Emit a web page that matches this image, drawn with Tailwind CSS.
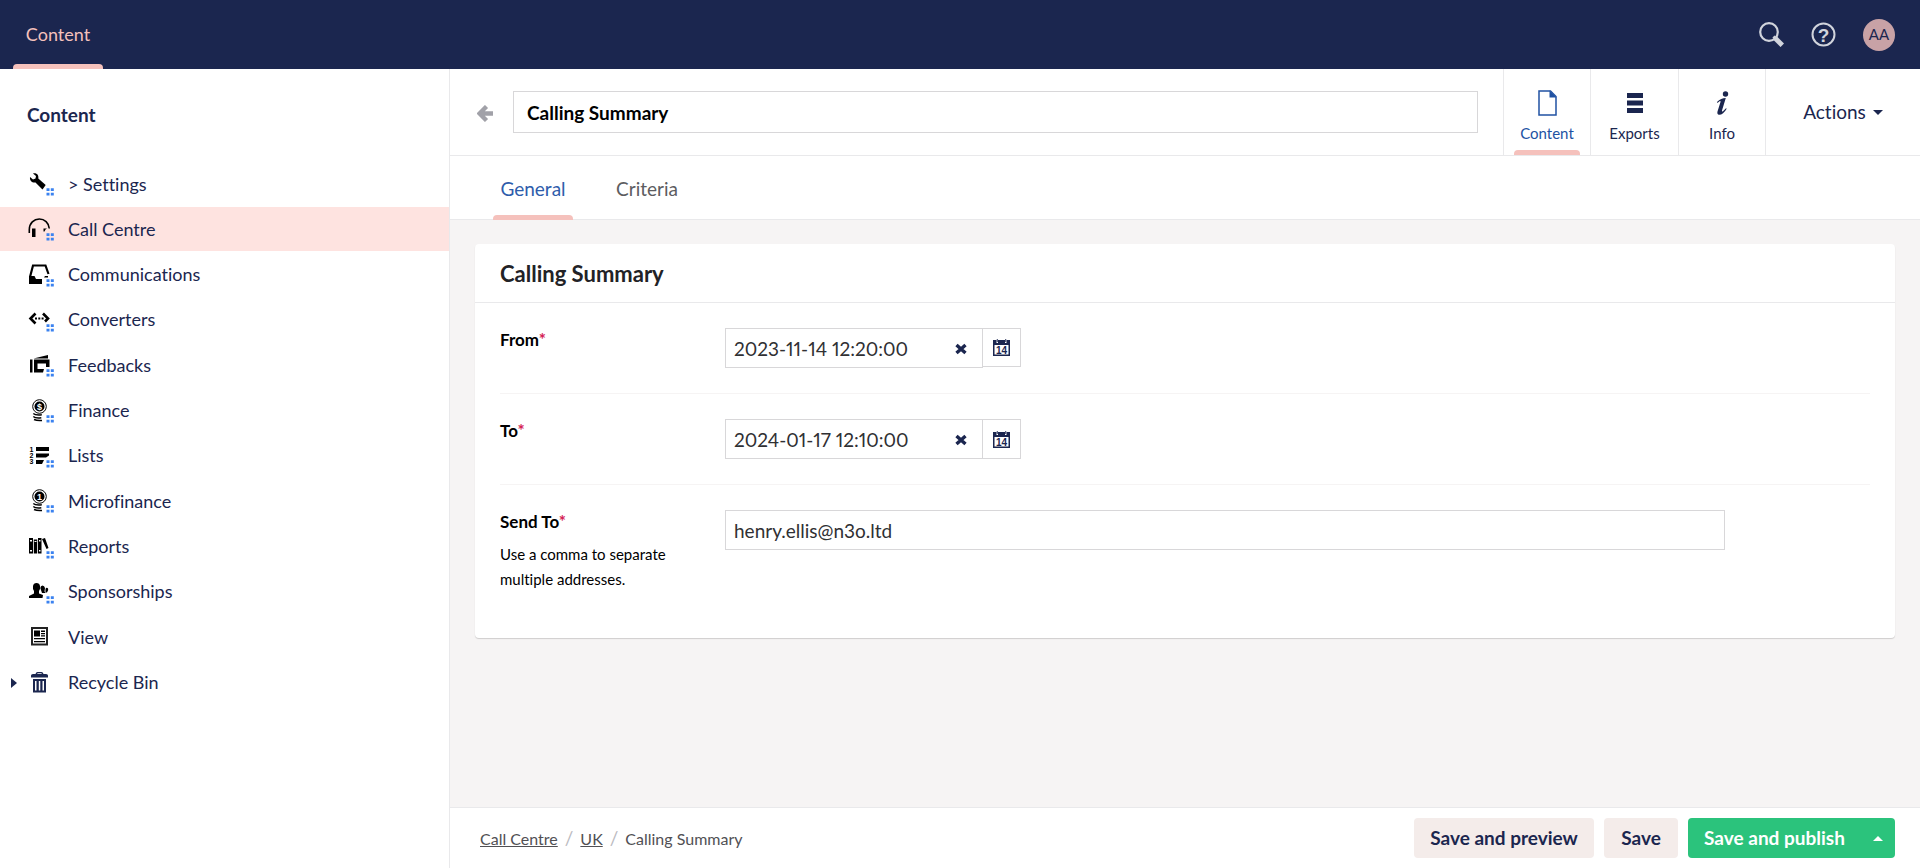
<!DOCTYPE html>
<html lang="en">
<head>
<meta charset="utf-8">
<meta name="viewport" content="width=device-width, initial-scale=1">
<title>Calling Summary</title>
<script src="https://cdn.jsdelivr.net/npm/@tailwindcss/browser@4"></script>
</head>
<body class="font-['Lato',sans-serif] [font-variant-ligatures:none] text-[#1b264f] bg-white">
<svg class="hidden">
  <symbol id="dots" viewBox="0 0 28 24"><path fill="#3b82f0" d="M18.500 16.200h3v2.800h-3zM22.800 16.200h3v2.800h-3zM18.500 20.700h3v2.800h-3zM22.800 20.700h3v2.800h-3z"/></symbol>
  <symbol id="calendar" viewBox="0 0 17 17"><path fill="currentColor" fill-rule="evenodd" d="M0 1h3.500v3h1.500V1h7v3h1.500V1H17v16H0zM1.500 6v9.500h14V6z"/><path fill="currentColor" d="M3.800 0h.9v3h-.9zM12.300 0h.9v3h-.9z"/><text x="8.500" y="14.500" text-anchor="middle" font-family="Liberation Sans" font-weight="bold" font-size="10" fill="currentColor">14</text></symbol>
  <symbol id="cross" viewBox="0 0 12 12"><path d="M1.500 2l9 8M10.500 2l-9 8" stroke="currentColor" stroke-width="3.400" fill="none"/></symbol>
  <symbol id="coins" viewBox="0 0 28 24"><circle cx="11.500" cy="7.500" r="6.800" fill="none" stroke="#000" stroke-width="1"/><circle cx="11.500" cy="7.500" r="5"/><path d="M5.300 14.500q2 2 8.500 1.300M5.300 17.500q2 2 8 1.300M6 20.500q3 1.300 8 .9" fill="none" stroke="#000" stroke-width="1.500"/></symbol>
</svg>
<div class="flex flex-col min-h-screen">
  <header class="h-[69px] shrink-0 bg-[#1b264f] flex justify-between pl-[13px] pr-[25px]">
    <nav class="flex"><a href="#" class="w-[90px] flex flex-col items-center text-[#f5c1bc] text-[18px]"><span class="flex-1 flex items-center">Content</span><span class="-mt-[5px] h-[5px] w-full rounded-t-[4px] bg-[#f5c1bc]"></span></a></nav>
    <div class="flex items-center gap-[27px]">
      <button aria-label="Search" class="text-[#d1d4dc]"><svg width="25" height="25" viewBox="0 0 25 25" fill="none" stroke="currentColor"><circle cx="10" cy="10" r="8.800" stroke-width="2.200"/><path d="M14.500 14.500l3 3" stroke-width="3"/><path d="M16.300 16.300l7 7" stroke-width="5"/></svg></button>
      <button aria-label="Help" class="text-[#d1d4dc]"><svg width="25" height="25" viewBox="0 0 25 25"><circle cx="12.500" cy="12.500" r="11" stroke="currentColor" stroke-width="2" fill="none"/><text x="12.500" y="19.500" text-anchor="middle" font-family="Liberation Sans" font-weight="bold" font-size="19" fill="currentColor">?</text></svg></button>
      <button class="size-8 rounded-full bg-[#c8a2a6] text-[#1b264f] text-[15px]">AA</button>
    </div>
  </header>
  <div class="flex flex-1">
    <aside class="w-[450px] shrink-0 border-r border-[#e9e9eb]">
      <h2 class="h-[93px] pl-[27px] pt-[33px] text-[19px] leading-[26px] font-bold">Content</h2>
      <ul class="grid auto-rows-fr h-[544px] text-[18px]">
        <li><a href="#" class="flex items-center h-[44px] pl-[28px] gap-[12px]"><svg width="28" height="24" viewBox="0 0 28 24"><path fill="#000" d="M5 1.500C8.500.5 11 3 10.300 6.500l7.400 6.500-3.200 4.500-7-7C4 11 1.500 8.500 2 5l3 2.500 2.500-1 .500-2.500z"/><use href="#dots"/></svg>&gt; Settings</a></li>
        <li><a href="#" class="flex items-center h-[44px] pl-[28px] gap-[12px] bg-[#fee3e0]"><svg width="28" height="24" viewBox="0 0 28 24"><path d="M1.300 16v-3.500C1.300 6 6 2 11.300 2S20.800 6 21.300 11.500" fill="none" stroke="#000" stroke-width="1.600"/><path d="M4 11.500h3.500V20H4zM15.500 11.500H19l-1.500 1-1 2h-1z"/><use href="#dots"/></svg>Call Centre</a></li>
        <li><a href="#" class="flex items-center h-[44px] pl-[28px] gap-[12px]"><svg width="28" height="24" viewBox="0 0 28 24"><path d="M2 14L5 2.500h12.500L20.500 11" fill="none" stroke="#000" stroke-width="2.200"/><path d="M1 13h5.500l1.500 3h6v5H1zM17 13h3v1.500h-4z"/><use href="#dots"/></svg>Communications</a></li>
        <li><a href="#" class="flex items-center h-[44px] pl-[28px] gap-[12px]"><svg width="28" height="24" viewBox="0 0 28 24"><path d="M7.500 5.500L2.500 10.500l5 5M15 5.500l5 5-3 3" fill="none" stroke="#000" stroke-width="2.600"/><path d="M7 9.500h2v2H7zM10.300 9.500h2v2h-2zM13.600 9.500h2v2h-2z"/><use href="#dots"/></svg>Converters</a></li>
        <li><a href="#" class="flex items-center h-[44px] pl-[28px] gap-[12px]"><svg width="28" height="24" viewBox="0 0 28 24"><path fill-rule="evenodd" d="M2 6.500h2.500v13H2zM6 6.500h15.500V14H18v-3.500H9.500v5.500H16l-1 3.500H6zM5.500 5.500L20 2v3.500z"/><use href="#dots"/></svg>Feedbacks</a></li>
        <li><a href="#" class="flex items-center h-[44px] pl-[28px] gap-[12px]"><svg width="28" height="24" viewBox="0 0 28 24"><use href="#coins"/><text x="11.500" y="10.800" font-family="Liberation Sans" font-weight="bold" font-size="9" text-anchor="middle" fill="#fff">$</text><use href="#dots"/></svg>Finance</a></li>
        <li><a href="#" class="flex items-center h-[44px] pl-[28px] gap-[12px]"><svg width="28" height="24" viewBox="0 0 28 24"><path d="M8 3h13v4H8zM8 9.500h13v2L18 13.500H8zM8 16h8l-2 4H8z"/><g font-family="Liberation Sans" font-weight="bold" font-size="7"><text x="1.500" y="7.500">1</text><text x="1.500" y="13.800">2</text><text x="1.500" y="20.300">3</text></g><use href="#dots"/></svg>Lists</a></li>
        <li><a href="#" class="flex items-center h-[44px] pl-[28px] gap-[12px]"><svg width="28" height="24" viewBox="0 0 28 24"><use href="#coins"/><text x="11.500" y="10.800" font-family="Liberation Sans" font-weight="bold" font-size="9" text-anchor="middle" fill="#fff">1</text><use href="#dots"/></svg>Microfinance</a></li>
        <li><a href="#" class="flex items-center h-[44px] pl-[28px] gap-[12px]"><svg width="28" height="24" viewBox="0 0 28 24"><path fill-rule="evenodd" d="M1 3h4v15.500H1zM2 5v1.500h2V5zM2 15v1.500h2V15zM5.800 4.500h3.400v14H5.800zM6.500 6v1h2V6zM10 3h3.500v15.500H10zM11 5v1.500h1.500V5zM11 15v1.500h1.500V15zM14 4l3-1 3.500 10-2 1z"/><use href="#dots"/></svg>Reports</a></li>
        <li><a href="#" class="flex items-center h-[44px] pl-[28px] gap-[12px]"><svg width="28" height="24" viewBox="0 0 28 24"><path d="M1 18v-2l5-2.500V11Q4.500 9 5 6q.5-3 3.500-3T12 6q.500 3-1 5v2.500l4 1.500-.5 3zM12.300 8q.3-2.500 2.200-2.500T17 8l-.5 3.500 1 1.500H14zM17.500 9q.5-1.500 1.500-1.300 1.500.3 1.200 2.300l-1.200 2.500h-1.500z"/><use href="#dots"/></svg>Sponsorships</a></li>
        <li><a href="#" class="flex items-center h-[44px] pl-[28px] gap-[12px]"><svg width="28" height="24" viewBox="0 0 28 24"><path d="M4 3h15v16.500H4z" fill="none" stroke="#222" stroke-width="2"/><path d="M6 5.500h6v6H6zM13 5.500h4V7h-4zM13 8h4v1.300h-4zM13 10.300h4v1.300h-4zM6 13h11v1.200H6zM6 16h11v1.200H6z"/></svg>View</a></li>
        <li><a href="#" class="flex items-center h-[44px] pl-[11px] gap-[12px]"><svg width="6" height="10" viewBox="0 0 6 10" class="mr-[-1px]"><path d="M0 0l6 5-6 5z" fill="currentColor"/></svg><svg width="28" height="24" viewBox="0 0 28 24" fill="currentColor"><path fill-rule="evenodd" d="M3 4.500Q3 3 5 3h2.500q.5-2 2-2h4q1.500 0 2 2H18q2 0 2 1.500V6.500H3zM9 3h5q-.3-.8-1-.8h-3q-.7 0-1 .8zM5 8h13v13.500H5zM7 10v9.500h1.500V10zM10.800 10v9.500h1.500V10zM14.500 10v9.500H16V10z"/></svg>Recycle Bin</a></li>
      </ul>
    </aside>
    <main class="flex-1 flex flex-col bg-[#f6f4f4] min-w-0">
      <div class="h-[87px] bg-white border-b border-[#e9e9eb] flex items-stretch">
        <div class="flex-1 flex items-center pl-[27px] pr-[25px] gap-[20px]">
          <button aria-label="Back" class="text-[#a1a1a8] pt-[3px]"><svg width="16" height="17" viewBox="0 0 16 17"><path d="M9.500 1.500l-7 7 7 7M3 8.500h13" fill="none" stroke="currentColor" stroke-width="4.400"/></svg></button>
          <input aria-label="Name" value="Calling Summary" class="flex-1 h-[42px] border border-[#d8d7d9] px-[13px] text-[19px] font-bold text-black">
        </div>
        <nav class="flex text-[15px]">
          <a href="#" class="w-[87px] border-l border-[#e9e9eb] flex flex-col items-center text-[#2152a3]"><svg class="mt-[21px]" width="19" height="26" viewBox="0 0 19 26"><path d="M1 1h11.500L18 6.500V25H1z" fill="none" stroke="currentColor" stroke-width="1.500"/><path d="M11.500.500L18.500 7.500h-7z" fill="currentColor"/></svg><span class="mt-[6px] leading-[22px]">Content</span><span class="mt-auto h-[5px] w-[66px] rounded-t-[4px] bg-[#f5c1bc]"></span></a>
          <a href="#" class="w-[88px] border-l border-[#e9e9eb] flex flex-col items-center"><svg class="mt-[21px]" width="16" height="26" viewBox="0 0 16 26"><path d="M0 3h16v5H0zM0 10.500h16v5H0zM0 18h16v5H0z" fill="currentColor"/></svg><span class="mt-[6px] leading-[22px]">Exports</span></a>
          <a href="#" class="w-[88px] border-x border-[#e9e9eb] flex flex-col items-center"><svg class="mt-[21px]" width="13" height="26" viewBox="0 0 13 26" fill="currentColor"><circle cx="9.500" cy="4" r="2.700"/><path d="M1 12Q5 8 9.800 8L6 20.500q-.2 1.500 1 .7l3-3 .7.600Q7 25 3 24.800.8 24.500 1.500 21.500L4.500 12q.3-1.500-1-.7l-2 1.700z"/></svg><span class="mt-[6px] leading-[22px]">Info</span></a>
          <button class="w-[154px] flex items-center justify-center gap-[7px] text-[19px]">Actions<svg width="10" height="5" viewBox="0 0 10 5"><path d="M0 0h10L5 5z" fill="currentColor"/></svg></button>
        </nav>
      </div>
      <nav class="h-[64px] bg-white border-b border-[#e9e9eb] flex pl-[43px] text-[19px] gap-[29px]">
        <a href="#" class="w-[80px] flex flex-col items-center text-[#2e5cab]"><span class="flex-1 flex items-center pt-[3px]">General</span><span class="-mt-[5px] -mb-px h-[5px] w-full rounded-t-[4px] bg-[#f5c1bc] relative"></span></a>
        <a href="#" class="w-[90px] flex items-center justify-center pt-[3px] text-[#5c5c60]">Criteria</a>
      </nav>
      <div class="flex-1 px-[25px] pt-[24px] pb-[24px]">
        <section class="bg-white rounded-[4px] shadow-[0_1px_1px_rgba(0,0,0,0.16)] pb-[46px]">
          <h3 class="h-[59px] flex items-center border-b border-[#e9e9eb] px-[25px] text-[22px] font-bold text-[#222226]">Calling Summary</h3>
          <div class="px-[25px]">
            <div class="flex py-[25px] border-b border-[#f6f4f4]">
              <label for="from" class="w-[225px] shrink-0 text-[17px] leading-[24px] font-bold text-black">From<span class="text-[#d42054]">*</span></label>
              <div class="flex items-start"><div class="relative"><input id="from" value="2023-11-14 12:20:00" class="w-[258px] h-[40px] border border-[#d8d7d9] pl-[8px] pr-[40px] text-[19px] proportional-nums text-[#303033]"><button aria-label="Clear" class="absolute right-[16px] top-[15px]"><svg width="12" height="12"><use href="#cross"/></svg></button></div><button aria-label="Open calendar" class="w-[39px] h-[39px] border border-[#d8d7d9] -ml-px flex items-center justify-center"><svg width="17" height="17"><use href="#calendar"/></svg></button></div>
            </div>
            <div class="flex py-[25px] border-b border-[#f6f4f4]">
              <label for="to" class="w-[225px] shrink-0 text-[17px] leading-[24px] font-bold text-black">To<span class="text-[#d42054]">*</span></label>
              <div class="flex items-start"><div class="relative"><input id="to" value="2024-01-17 12:10:00" class="w-[258px] h-[40px] border border-[#d8d7d9] pl-[8px] pr-[40px] text-[19px] proportional-nums text-[#303033]"><button aria-label="Clear" class="absolute right-[16px] top-[15px]"><svg width="12" height="12"><use href="#cross"/></svg></button></div><button aria-label="Open calendar" class="w-[39px] h-[40px] border border-[#d8d7d9] -ml-px flex items-center justify-center"><svg width="17" height="17"><use href="#calendar"/></svg></button></div>
            </div>
            <div class="flex pt-[25px]">
              <div class="w-[225px] shrink-0 pr-[45px]"><label for="send" class="block text-[17px] leading-[24px] font-bold text-black">Send To<span class="text-[#d42054]">*</span></label><p class="mt-[8px] text-[15px] leading-[25px] text-black">Use a comma to separate multiple addresses.</p></div>
              <input id="send" value="henry.ellis@n3o.ltd" class="flex-1 max-w-[1000px] h-[40px] border border-[#d8d7d9] px-[8px] text-[19px] text-[#303033]">
            </div>
          </div>
        </section>
      </div>
      <footer class="h-[61px] bg-white border-t border-[#e9e9eb] flex items-center justify-between pl-[30px] pr-[25px]">
        <nav class="flex items-center pt-[2px] text-[16px] text-[#515054] gap-[7px]"><a href="#" class="underline">Call Centre</a><span class="text-[19px] leading-[24px] pb-[3px] text-[#bbbabf]">/</span><a href="#" class="underline">UK</a><span class="text-[19px] leading-[24px] pb-[3px] text-[#bbbabf]">/</span><span>Calling Summary</span></nav>
        <div class="flex gap-[10px] text-[19px] font-bold">
          <button class="h-[40px] w-[180px] rounded-[4px] bg-[#f4ecea]">Save and preview</button>
          <button class="h-[40px] w-[74px] rounded-[4px] bg-[#f4ecea]">Save</button>
          <div class="flex"><button class="h-[40px] w-[173px] rounded-l-[4px] bg-[#2bc37c] text-white">Save and publish</button><button aria-label="More publish options" class="h-[40px] w-[34px] rounded-r-[4px] bg-[#2bc37c] text-white flex items-center justify-center"><svg width="10" height="5" viewBox="0 0 10 5"><path d="M0 5h10L5 0z" fill="currentColor"/></svg></button></div>
        </div>
      </footer>
    </main>
  </div>
</div>
</body>
</html>
